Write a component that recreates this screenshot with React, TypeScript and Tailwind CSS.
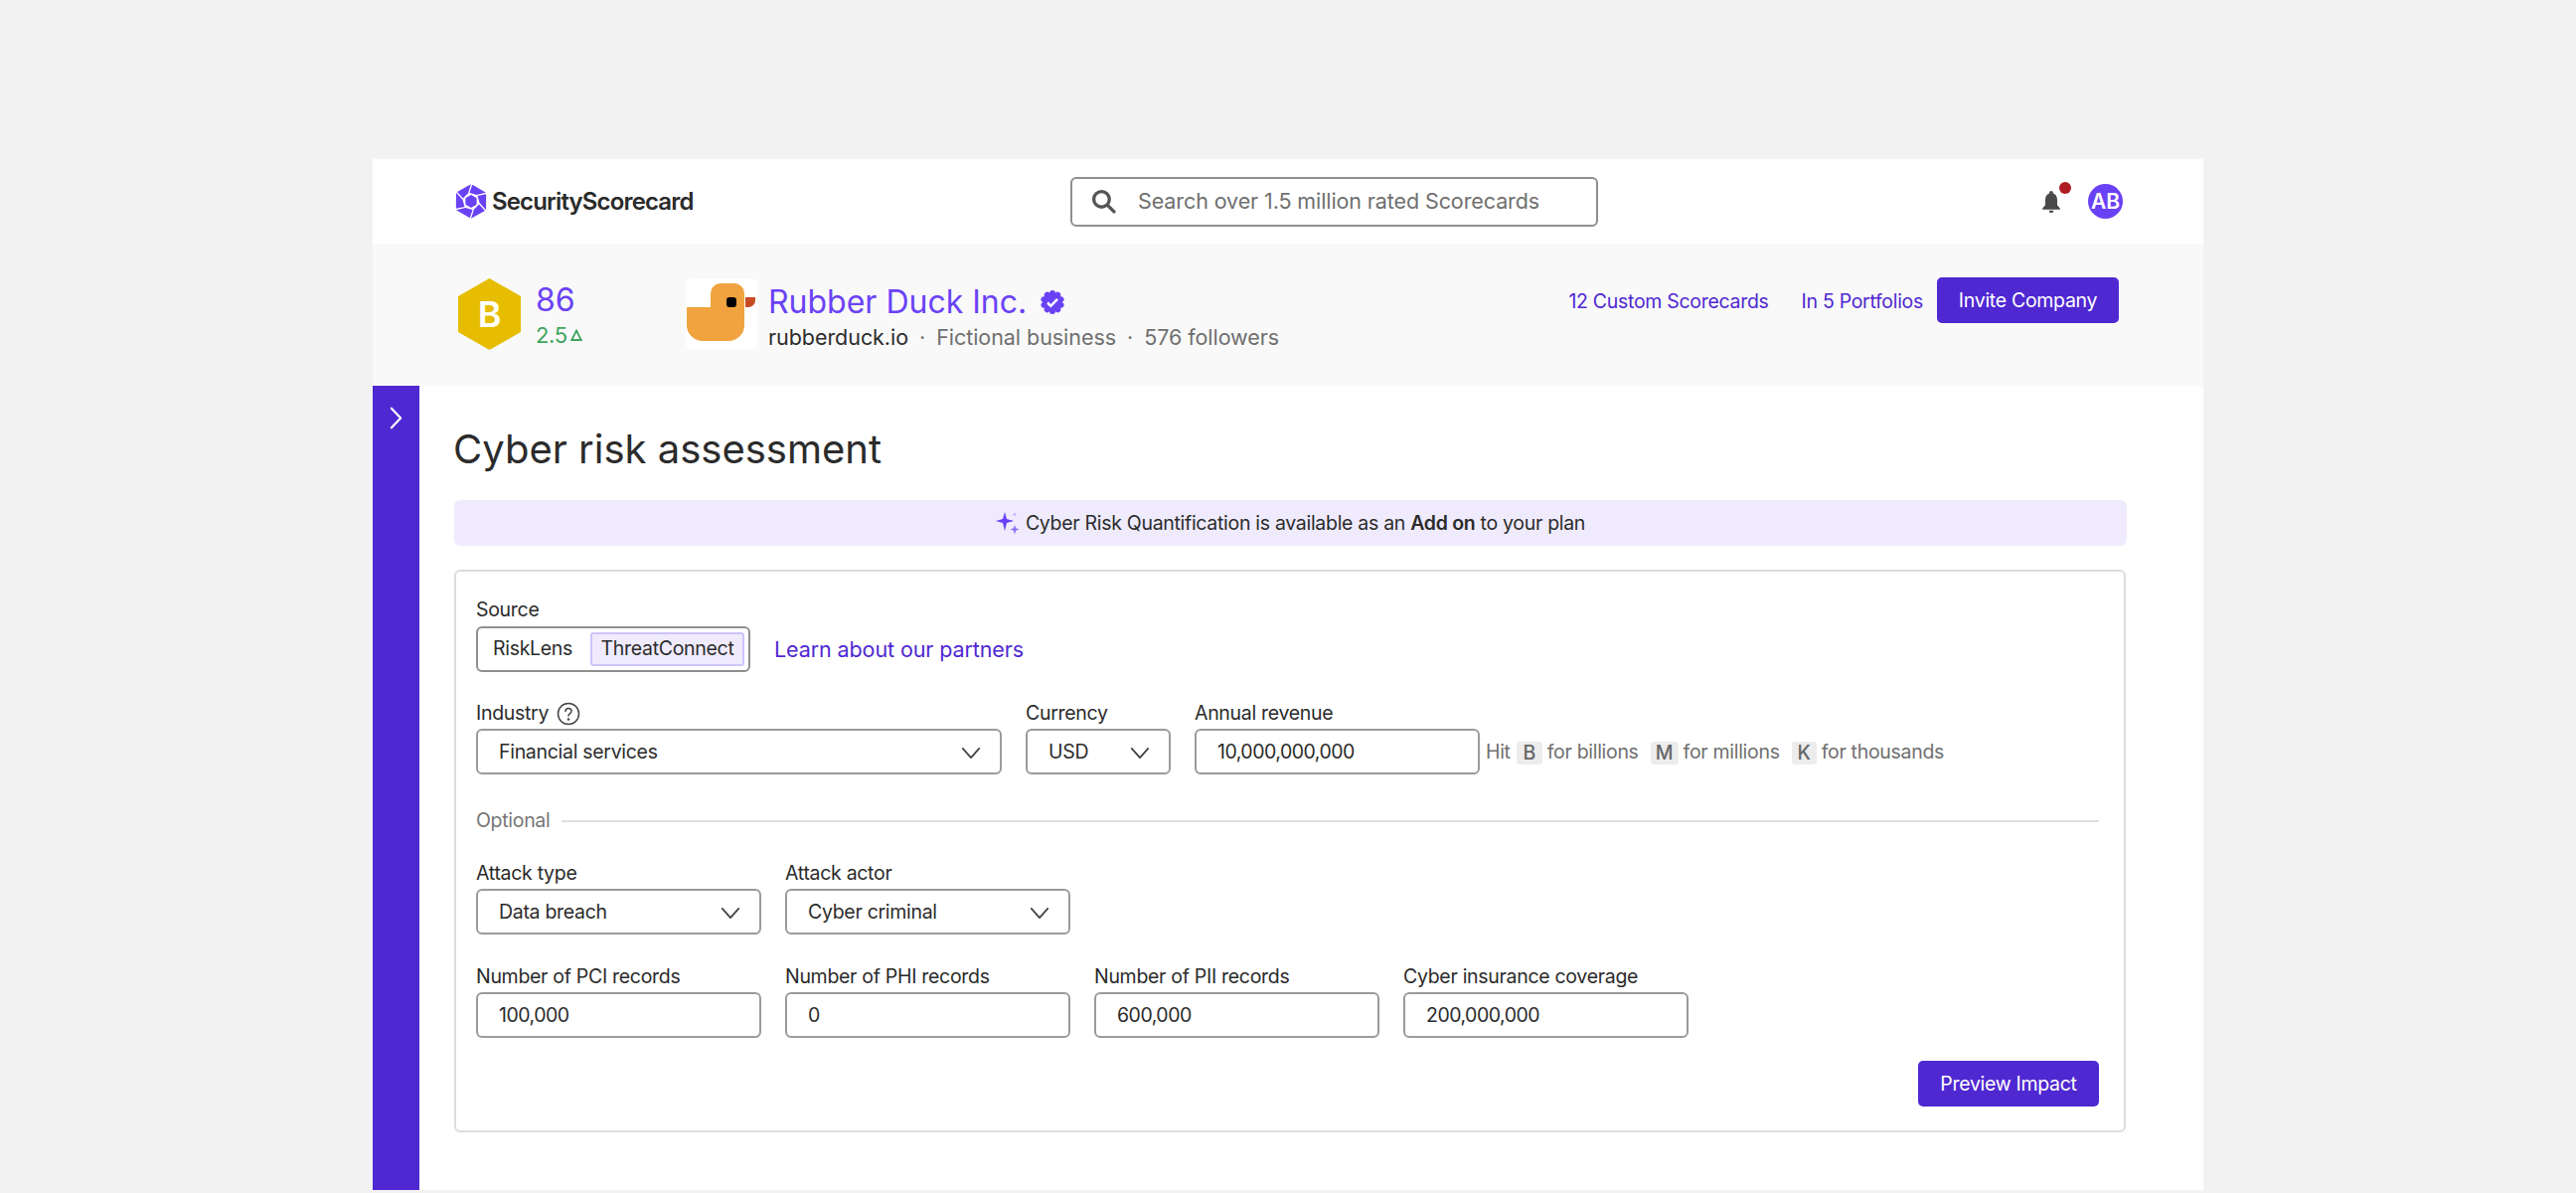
import React from "react";

const P = "#6a42f5";

function Chevron({ className = "" }: { className?: string }) {
  return (
    <svg viewBox="0 0 24 14" className={className} fill="none" stroke="#444" strokeWidth="2" strokeLinecap="round" strokeLinejoin="round">
      <path d="M3 2l9 10 9-10" />
    </svg>
  );
}

function Field({ label, children, className = "" }: { label: React.ReactNode; children: React.ReactNode; className?: string }) {
  return (
    <div className={`flex flex-col ${className}`}>
      <div className="h-[25px] text-[19.5px] tracking-[-0.3px] leading-[25px] text-[#2b2b2b] flex items-center gap-2 whitespace-nowrap">{label}</div>
      {children}
    </div>
  );
}

function Box({ children, className = "" }: { children: React.ReactNode; className?: string }) {
  return (
    <div className={`h-[46px] mt-[3px] rounded-[6px] border-2 border-[#9b9b9b] bg-white flex items-center justify-between pl-[21px] pr-[18px] pt-[2px] text-[19.5px] text-[#2b2b2b] ${className}`}>
      {children}
    </div>
  );
}

function NumBox({ value }: { value: string }) {
  return <Box className="tracking-[-0.5px]">{value}</Box>;
}

function Select({ value }: { value: string }) {
  return (
    <Box className="tracking-[-0.3px]">
      <span>{value}</span>
      <Chevron className="w-[22px] h-[13px]" />
    </Box>
  );
}

function Key({ k, className }: { k: string; className: string }) {
  return <span className={`ml-[6px] mr-[5px] rounded-[3px] bg-[#ececec] text-[#666] font-medium leading-[23px] inline-block text-center ${className}`}>{k}</span>;
}

const blades = [0, 60, 120, 180, 240, 300];
const lobes = [0, 36, 72, 108, 144, 180, 216, 252, 288, 324];

export default function App() {
  return (
    <div className="min-h-screen bg-[#f2f2f2] pt-[160px] pl-[375px] font-['Inter',sans-serif]">
      <div className="w-[1842px] h-[1037px] bg-white flex flex-col">
        <header className="h-[85px] flex items-center pl-[83px] pr-[81px]">
          <div className="flex items-center w-[619px]">
            <svg viewBox="-16 -17.500 32 35" className="w-[32px] h-[35px]" fill={P}>
              {blades.map((a) => (
                <path key={a} transform={`rotate(${a})`} d="M1.200 -16.800L15 -8.700L5.600 -6.600L-1.500 -8.400z" />
              ))}
              <path d="M0 -6.500L5.600 -3.250V3.250L0 6.500L-5.600 3.250V-3.250z" />
            </svg>
            <span className="ml-[5px] text-[24px] font-semibold tracking-[-0.85px] text-[#2a2a2a]">SecurityScorecard</span>
          </div>
          <div className="w-[531px] h-[50px] rounded-[6px] border-2 border-[#8f8f8f] flex items-center pl-[19px] text-[21.5px] tracking-[-0.1px] text-[#6f6f6f]">
            <svg viewBox="0 0 24 24" className="w-[25px] h-[25px]" fill="none" stroke="#555" strokeWidth="3.200" strokeLinecap="round">
              <circle cx="10" cy="10" r="7.500" />
              <path d="M16 16l6 6" />
            </svg>
            <span className="ml-[22px]">Search over 1.5 million rated Scorecards</span>
          </div>
          <div className="flex items-center flex-1 justify-end">
            <div className="relative w-[22px] h-[24px]">
              <svg viewBox="0 0 22 26" className="w-[22px] h-[24px]" fill="#4a4a4a">
                <path d="M11 1c-1.200 0-2 .8-2 2v.9C5.800 5 4.500 8 4.500 11v5.500L1.500 20v1.500h19V20l-3-3.500V11c0-3-1.300-6-4.500-7.100V3c0-1.200-.8-2-2-2z" />
                <path d="M8.500 22.500h5c0 1.500-1 2.500-2.500 2.500s-2.500-1-2.500-2.500z" />
              </svg>
              <span className="absolute -top-[8px] left-[19px] w-[12px] h-[12px] rounded-full bg-[#b01c24]" />
            </div>
            <div className="ml-[26px] w-[35px] h-[35px] rounded-full bg-[#6a42f5] text-white font-semibold text-[21px] flex items-center justify-center">AB</div>
          </div>
        </header>

        <section className="h-[143px] bg-[#f9f9f9] flex pl-[86px] pr-[85px] pt-[35px] justify-between">
          <div className="flex">
            <div className="relative w-[63px] h-[72px] flex items-center justify-center">
              <svg viewBox="0 0 63 72" className="absolute inset-0 w-[63px] h-[72px]" fill="#e6bd00">
                <path d="M31.500 0L63 18v36L31.500 72 0 54V18z" />
              </svg>
              <span className="relative text-white font-semibold text-[36px] leading-none">B</span>
            </div>
            <div className="ml-[15px] w-[151px] flex flex-col">
              <span className="text-[32px] leading-[38px] text-[#6a42f5] mt-[3px]">86</span>
              <span className="text-[22px] leading-[26px] tracking-[-0.3px] text-[#3fa55f] flex items-center mt-[3px]">
                2.5
                <svg viewBox="0 0 12 12" className="w-[12px] h-[12px] ml-[3px]" fill="none" stroke="#3fa55f" strokeWidth="1.800">
                  <path d="M6 1.500L10.800 11H1.200z" />
                </svg>
              </span>
            </div>
            <div className="w-[72px] h-[71px] bg-white rounded-[6px]">
              <svg viewBox="0 0 72 71" className="w-[72px] h-[71px]">
                <path d="M60 19H70V22a7 7 0 0 1-7 7H60z" fill="#c84b24" />
                <path d="M35 5H49a10 10 0 0 1 10 10V47a16 16 0 0 1-16 16H17a16 16 0 0 1-16-16V29H25V15a10 10 0 0 1 10-10z" fill="#f0a33e" />
                <rect x="41" y="19" width="10" height="10" rx="3" fill="#000" />
              </svg>
            </div>
            <div className="ml-[11px] flex flex-col">
              <div className="flex items-center h-[44px] mt-[2px]">
                <span className="text-[32px] leading-[44px] text-[#6a42f5]">Rubber Duck Inc.</span>
                <svg viewBox="-12 -12 24 24" className="w-[24px] h-[24px] ml-[14px]" fill="#6a42f5">
                  <circle r="9.500" />
                  {lobes.map((a) => (
                    <circle key={a} transform={`rotate(${a}) translate(0 -9)`} r="3" />
                  ))}
                  <path d="M-5 0.500l3.300 3.300 6.700-7" fill="none" stroke="#fff" strokeWidth="2.500" />
                </svg>
              </div>
              <div className="text-[21.5px] leading-[26px] tracking-[-0.05px] text-[#6f6f6f] whitespace-nowrap">
                <span className="text-[#2b2b2b]">rubberduck.io</span>
                <span className="mx-[11px]">·</span>
                Fictional business
                <span className="mx-[11px]">·</span>
                576 followers
              </div>
            </div>
          </div>
          <div className="flex items-start text-[19.5px] tracking-[-0.3px] text-[#4f28d2] -mt-[1px]">
            <a className="h-[46px] leading-[48px]">12 Custom Scorecards</a>
            <a className="h-[46px] leading-[48px] ml-[33px]">In 5 Portfolios</a>
            <button className="ml-[14px] w-[183px] h-[46px] pt-[2px] rounded-[5px] bg-[#4f28d2] text-white">Invite Company</button>
          </div>
        </section>

        <div className="flex-1 flex">
          <aside className="w-[47px] bg-[#4f28d2] flex justify-center pt-[21px]">
            <svg viewBox="0 0 14 24" className="w-[13px] h-[23px]" fill="none" stroke="#fff" strokeWidth="2.400" strokeLinecap="round" strokeLinejoin="round">
              <path d="M2 1.500L12 12 2 22.500" />
            </svg>
          </aside>
          <main className="flex-1 pl-[35px] pr-[77px]">
            <h1 className="h-[115px] pt-[39px] text-[40px] leading-[50px] text-[#2b2b2b] -ml-[1px]">Cyber risk assessment</h1>
            <div className="h-[46px] pt-[2px] rounded-[6px] bg-[#efebfd] flex items-center justify-center text-[19.5px] tracking-[-0.3px] text-[#2b2b2b] pr-[2px]">
              <svg viewBox="0 0 26 26" className="w-[26px] h-[26px] mr-[6px] -mt-[2px]" fill="#6a42f5">
                <path d="M11 2l2 7 7 2-7 2-2 8-2-8-7-2 7-2z" />
                <path d="M21 15l1.200 3.300 3.300 1.200-3.300 1.200L21 24.500l-1.200-3.800-3.300-1.200 3.300-1.200z" fill="#8f72f7" />
                <path d="M21 2l.7 1.800 1.800.7-1.800.7L21 7l-.7-1.800-1.800-.7 1.800-.7z" fill="#c5b5fb" />
              </svg>
              <span>
                Cyber Risk Quantification is available as an <b className="font-semibold">Add on</b> to your plan
              </span>
            </div>
            <div className="mt-[24px] mr-[1px] h-[566px] rounded-[6px] border-2 border-[#dcdcdc] pl-[20px] pr-[25px] pt-[26px]">
              <div className="h-[25px] text-[19.5px] tracking-[-0.3px] leading-[25px] text-[#2b2b2b]">Source</div>
              <div className="flex items-center mt-[4px]">
                <div className="w-[276px] h-[46px] rounded-[6px] border-2 border-[#8f8f8f] flex items-center pl-[5px] text-[19.5px] tracking-[-0.3px] text-[#2b2b2b]">
                  <span className="w-[108px] pl-[10px]">RiskLens</span>
                  <span className="w-[155px] h-[34px] rounded-[3px] bg-[#efebfd] border-2 border-[#cfc4fb] flex items-center justify-center">ThreatConnect</span>
                </div>
                <a className="ml-[24px] text-[21.5px] tracking-[-0.1px] text-[#4f28d2]">Learn about our partners</a>
              </div>

              <div className="flex mt-[29px] gap-[24px]">
                <Field
                  className="w-[529px]"
                  label={
                    <>
                      Industry
                      <svg viewBox="0 0 24 24" className="w-[24px] h-[24px]" fill="none" stroke="#444" strokeWidth="1.500" strokeLinecap="round">
                        <circle cx="12" cy="12" r="10.500" />
                        <path d="M9 9.500c0-1.800 1.300-3 3-3s3 1.200 3 2.800c0 2.400-3 2.400-3 4.700" />
                        <circle cx="12" cy="17.500" r=".6" fill="#444" />
                      </svg>
                    </>
                  }
                >
                  <Select value="Financial services" />
                </Field>
                <Field label="Currency" className="w-[146px]">
                  <Select value="USD" />
                </Field>
                <div className="flex">
                  <Field label="Annual revenue" className="w-[287px]">
                    <NumBox value="10,000,000,000" />
                  </Field>
                  <div className="ml-[6px] mt-[28px] pt-[2px] h-[46px] flex items-center text-[19.5px] tracking-[-0.3px] text-[#6f6f6f] whitespace-nowrap">
                    Hit
                    <Key k="B" className="w-[26px]" />
                    for billions
                    <span className="w-[6px]" />
                    <Key k="M" className="w-[28px]" />
                    for millions
                    <span className="w-[6px]" />
                    <Key k="K" className="w-[25px]" />
                    for thousands
                  </div>
                </div>
              </div>

              <div className="flex items-center mt-[34px] h-[26px] text-[19.5px] tracking-[-0.3px] text-[#767676]">
                Optional
                <div className="ml-[12px] flex-1 h-[2px] bg-[#e0e0e0]" />
              </div>

              <div className="flex mt-[27px] gap-[24px]">
                <Field label="Attack type" className="w-[287px]">
                  <Select value="Data breach" />
                </Field>
                <Field label="Attack actor" className="w-[287px]">
                  <Select value="Cyber criminal" />
                </Field>
              </div>

              <div className="flex mt-[30px] gap-[24px]">
                <Field label="Number of PCI records" className="w-[287px]">
                  <NumBox value="100,000" />
                </Field>
                <Field label="Number of PHI records" className="w-[287px]">
                  <NumBox value="0" />
                </Field>
                <Field label="Number of PII records" className="w-[287px]">
                  <NumBox value="600,000" />
                </Field>
                <Field label="Cyber insurance coverage" className="w-[287px]">
                  <NumBox value="200,000,000" />
                </Field>
              </div>

              <div className="flex justify-end mt-[23px]">
                <button className="w-[182px] h-[46px] pt-[1px] rounded-[5px] bg-[#4f28d2] text-white text-[19.5px] tracking-[-0.3px]">Preview Impact</button>
              </div>
            </div>
          </main>
        </div>
      </div>
    </div>
  );
}
